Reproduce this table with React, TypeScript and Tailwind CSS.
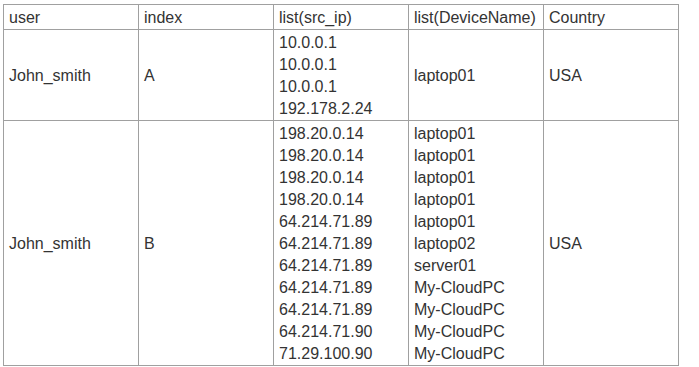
import React from "react";

const rows = [
  {
    user: "John_smith",
    index: "A",
    ips: ["10.0.0.1", "10.0.0.1", "10.0.0.1", "192.178.2.24"],
    devices: ["laptop01"],
    country: "USA",
  },
  {
    user: "John_smith",
    index: "B",
    ips: [
      "198.20.0.14",
      "198.20.0.14",
      "198.20.0.14",
      "198.20.0.14",
      "64.214.71.89",
      "64.214.71.89",
      "64.214.71.89",
      "64.214.71.89",
      "64.214.71.89",
      "64.214.71.90",
      "71.29.100.90",
    ],
    devices: [
      "laptop01",
      "laptop01",
      "laptop01",
      "laptop01",
      "laptop01",
      "laptop02",
      "server01",
      "My-CloudPC",
      "My-CloudPC",
      "My-CloudPC",
      "My-CloudPC",
    ],
    country: "USA",
  },
];

const headers = ["user", "index", "list(src_ip)", "list(DeviceName)", "Country"];

const cell = "border border-[#a0a0a0] px-[5px] align-middle";

export default function App() {
  return (
    <div className="bg-white w-[699px] h-[367px] pt-1 pl-[3px] font-['Liberation_Sans',Arial,sans-serif] text-[16px] leading-[22px] text-[#333]">
      <table className="border-collapse table-fixed w-[675px]">
        <colgroup>
          {headers.map((h) => (
            <col key={h} className="w-[135px]" />
          ))}
        </colgroup>
        <thead>
          <tr className="h-[25px]">
            {headers.map((h) => (
              <th key={h} className={`${cell} pt-[2px] pb-0 text-left font-normal`}>
                {h}
              </th>
            ))}
          </tr>
        </thead>
        <tbody>
          {rows.map((r) => (
            <tr key={r.index}>
              <td className={`${cell} pt-[2px]`}>{r.user}</td>
              <td className={`${cell} pt-[2px]`}>{r.index}</td>
              <td className={`${cell} pt-[2px] pb-0`}>
                {r.ips.map((ip, i) => (
                  <div key={i}>{ip}</div>
                ))}
              </td>
              <td className={`${cell} pt-[2px] pb-0`}>
                {r.devices.map((d, i) => (
                  <div key={i}>{d}</div>
                ))}
              </td>
              <td className={`${cell} pt-[2px]`}>{r.country}</td>
            </tr>
          ))}
        </tbody>
      </table>
    </div>
  );
}
